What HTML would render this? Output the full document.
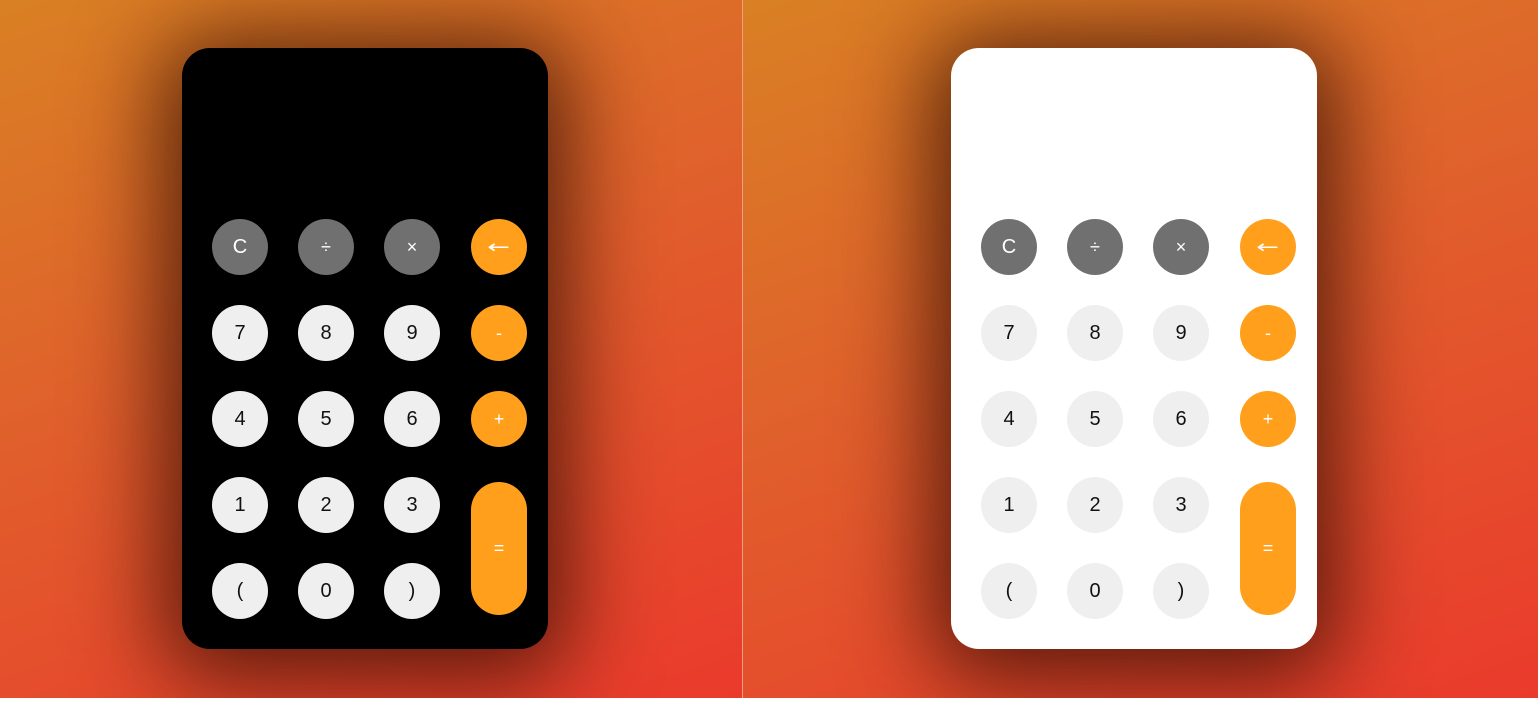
<!DOCTYPE html>
<html><head><style>
html,body{margin:0;padding:0;width:1538px;height:703px;background:#fff;overflow:hidden;font-family:"Liberation Sans",Arial,sans-serif}
.p{position:absolute;top:0;height:698px;background:linear-gradient(160deg,#d98024 0%,#e0602c 45%,#ea3a2c 100%);overflow:hidden}
.c{position:absolute;top:48px;width:366px;height:601px;border-radius:28px;box-shadow:0 10px 90px 20px rgba(40,10,0,.75)}
.b{position:absolute;width:56px;height:56px;border-radius:28px;display:flex;align-items:center;justify-content:center;font-size:20px}
.g{background:#707070;color:#fff}
.l{background:#efefef;color:#111}
.o{background:#ff9f1c;color:#fff}
.a span{font-family:"DejaVu Sans",sans-serif;line-height:1;display:inline-block;transform:scaleX(1.5);margin-top:2px}
</style></head><body>
<div class="p" style="left:0;width:742px"><div class="c" style="left:182px;background:#000"><div id="k1"></div></div></div>
<div style="position:absolute;left:742px;top:0;width:1px;height:698px;background:#f0a080"></div>
<div class="p" style="left:743px;width:795px"><div class="c" style="left:208px;background:#fff"><div id="k2"></div></div></div>
<script>
var rows=[["C","÷","×","←"],["7","8","9","-"],["4","5","6","+"],["1","2","3"],["(","0",")"]];
function build(){
 var h="";
 for(var r=0;r<5;r++)for(var c=0;c<rows[r].length;c++){
  var t=rows[r][c],cls=r==0?(c==3?"o":"g"):(c==3?"o":"l");
  var fs=t=="←"?"18px":(t=="÷"||t=="×"||t=="-"||t=="+")?"18px":"20px";
  var inner=t=="←"?'<span>←</span>':t;
  h+='<div class="b '+cls+(t=="←"?' a':'')+'" style="left:'+(30+c*86+(c==3?1:0))+'px;top:'+(171+r*86)+'px;font-size:'+fs+'">'+inner+'</div>';
 }
 h+='<div class="b o" style="left:289px;top:434px;height:133px;font-size:18px">=</div>';
 return h;
}
document.getElementById("k1").innerHTML=build();
document.getElementById("k2").innerHTML=build();
</script>
</body></html>
